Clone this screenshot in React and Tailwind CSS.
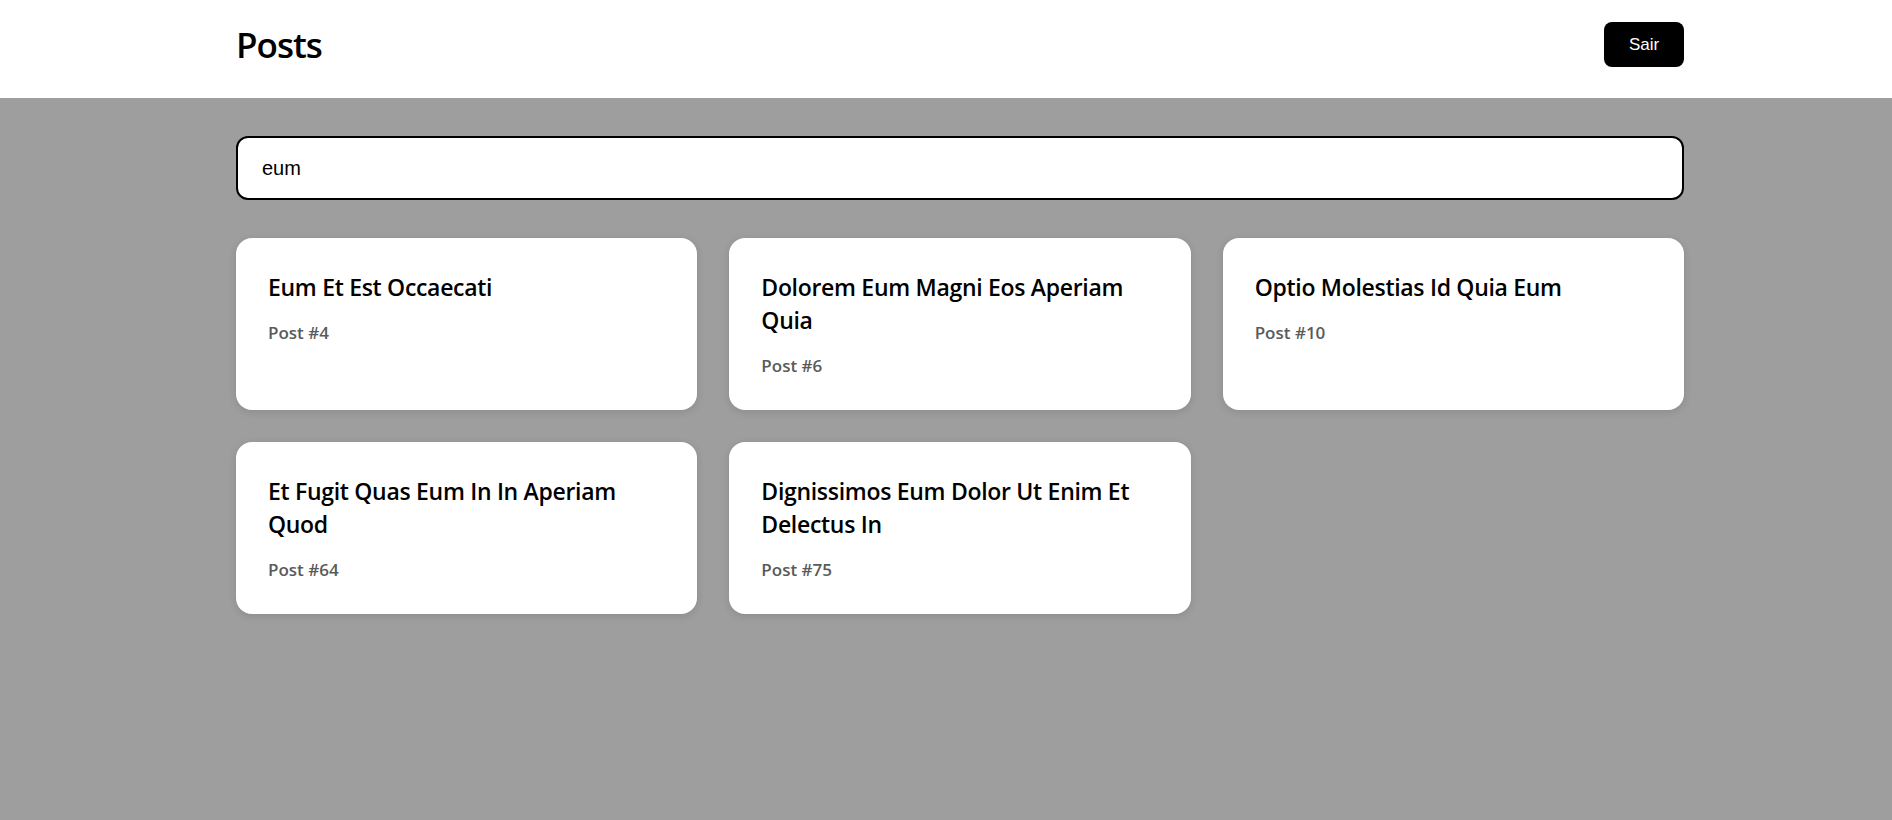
const posts = [
  { id: 4, title: 'Eum Et Est Occaecati' },
  { id: 6, title: 'Dolorem Eum Magni Eos Aperiam Quia' },
  { id: 10, title: 'Optio Molestias Id Quia Eum' },
  { id: 64, title: 'Et Fugit Quas Eum In In Aperiam Quod' },
  { id: 75, title: 'Dignissimos Eum Dolor Ut Enim Et Delectus In' },
];

function PostCard({ post }) {
  return (
    <div className="bg-white rounded-2xl px-8 pt-[33px] pb-[31px] shadow-[0_2px_8px_rgba(0,0,0,0.12)]">
      <h2 className="text-[23px] leading-[33px] font-semibold text-black tracking-[-0.3px]">{post.title}</h2>
      <p className="mt-[15px] text-[17px] leading-[27px] font-semibold text-[#5a5a5a]">Post #{post.id}</p>
    </div>
  );
}

export default function App() {
  return (
    <div className="min-h-[820px] bg-[#9e9e9e] font-['Open_Sans',sans-serif]">
      <header className="bg-white h-[98px] pl-[28px]">
        <div className="mx-auto w-[1448px] pt-[22px] flex items-center justify-between">
          <h1 className="text-[35px] leading-[45px] font-semibold text-black tracking-[-1px]">Posts</h1>
          <button className="w-[80px] h-[45px] rounded-lg bg-black text-white text-[17px] font-['Liberation_Sans',sans-serif]">
            Sair
          </button>
        </div>
      </header>
      <main className="pl-[28px] pt-[38px]">
        <div className="mx-auto w-[1448px]">
          <input
            defaultValue="eum"
            className="w-full h-[64px] rounded-xl border-2 border-black bg-white px-6 text-[20px] text-black outline-none font-['Liberation_Sans',sans-serif]"
          />
          <div className="mt-[38px] grid grid-cols-3 gap-8">
            {posts.map((p) => (
              <PostCard key={p.id} post={p} />
            ))}
          </div>
        </div>
      </main>
    </div>
  );
}
